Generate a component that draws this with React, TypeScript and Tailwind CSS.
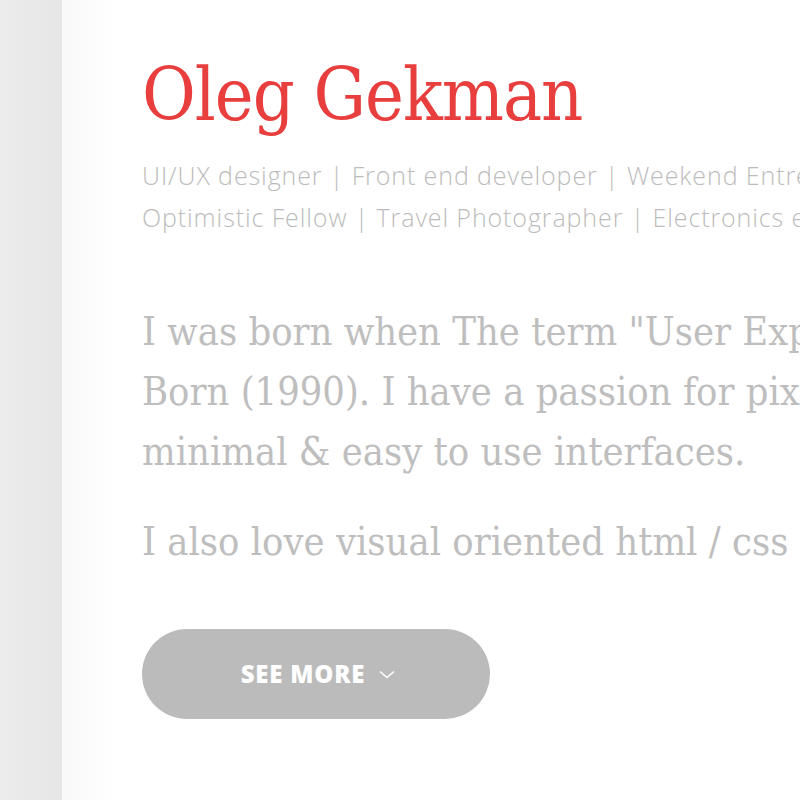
import React from "react";

export default function App() {
  return (
    <div className="flex w-[800px] h-[800px] overflow-hidden bg-white">
      <div className="w-[62px] shrink-0 h-full bg-[linear-gradient(to_right,#ececec,#e6e6e6)]" />
      <div className="flex-1 h-full bg-[linear-gradient(to_right,#f8f8f8_0px,#ffffff_56px)] pl-[80px] pt-[52px] whitespace-nowrap">
        <h1 className="text-[73px] leading-[86px] text-[#e83e3e] font-['DejaVu_Serif_Condensed','DejaVu_Serif',serif] tracking-[-1px]">
          Oleg Gekman
        </h1>
        <div className="mt-[16px] text-[25px] leading-[42px] tracking-[0.9px] text-[#bcbcbc] font-['Open_Sans',sans-serif] font-light">
          <div>UI/UX designer | Front end developer | Weekend Entrepreneur</div>
          <div>Optimistic Fellow | Travel Photographer | Electronics enthusiast</div>
        </div>
        <div className="mt-[63px] text-[39.5px] leading-[60px] text-[#bebebe] font-['DejaVu_Serif_Condensed','DejaVu_Serif',serif]">
          <div>I was born when The term "User Experience" was</div>
          <div>Born (1990). I have a passion for pixel perfect,</div>
          <div>minimal &amp; easy to use interfaces.</div>
          <div className="mt-[30px]">I also love visual oriented html / css coding.</div>
        </div>
        <button className="mt-[58px] w-[348px] h-[90px] rounded-full bg-[#bbbbbb] flex items-center justify-center gap-[14px] pl-[4px] text-white font-['Open_Sans',sans-serif] font-extrabold text-[24px] tracking-[0.8px]">
          <span>SEE MORE</span>
          <svg width="16" height="9" viewBox="0 0 16 9" fill="none" stroke="white" strokeWidth="1.6">
            <path d="M1 1.5l7 6 7-6" />
          </svg>
        </button>
      </div>
    </div>
  );
}
